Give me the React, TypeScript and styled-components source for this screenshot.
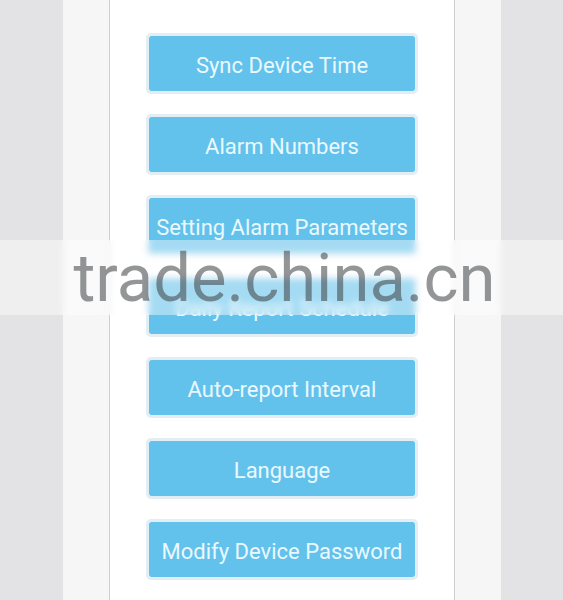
import styled, { createGlobalStyle } from 'styled-components';

const GlobalStyle = createGlobalStyle`
  html, body {
    margin: 0;
    padding: 0;
    background: #e3e3e5;
  }
  body {
    font-family: Roboto, 'Liberation Sans', sans-serif;
  }
`;

const Page = styled.div`
  position: relative;
  display: flex;
  width: 563px;
  height: 600px;
  overflow: hidden;
  background: #e3e3e5;
`;

const Gutter = styled.div`
  flex: 0 0 63px;
`;

const Side = styled.div`
  flex: 0 0 46px;
  background: #f6f6f7;
`;

const Panel = styled.div`
  display: flex;
  flex-direction: column;
  align-items: center;
  gap: 20px;
  box-sizing: border-box;
  flex: 0 0 346px;
  padding-top: 33px;
  background: #ffffff;
  border-left: 1px solid #cfcfd1;
  border-right: 1px solid #cfcfd1;
`;

const MenuButton = styled.button`
  box-sizing: border-box;
  width: 272px;
  height: 61px;
  padding: 3px 0 0;
  border: 3px solid #e2edf4;
  border-radius: 5px;
  background: #63c2eb;
  background-clip: padding-box;
  color: #eaf9ff;
  font-family: Roboto, 'Liberation Sans', sans-serif;
  font-size: 22px;
  cursor: pointer;
`;

const Watermark = styled.div`
  position: absolute;
  left: 0;
  right: 0;
  top: 240px;
  height: 75px;
  display: flex;
  align-items: center;
  justify-content: center;
  background: rgba(255, 255, 255, 0.42);
  backdrop-filter: blur(3px);
  color: rgba(60, 62, 64, 0.55);
  font-family: Roboto, 'Liberation Sans', sans-serif;
  font-size: 67px;
  line-height: 1;
  padding: 2px 0 0 6px;
  box-sizing: border-box;
  pointer-events: none;
`;

const items = [
  'Sync Device Time',
  'Alarm Numbers',
  'Setting Alarm Parameters',
  'Daily Report Schedule',
  'Auto-report Interval',
  'Language',
  'Modify Device Password',
];

export default function App() {
  return (
    <>
      <GlobalStyle />
      <Page>
        <Gutter />
        <Side />
        <Panel>
          {items.map((label) => (
            <MenuButton key={label}>{label}</MenuButton>
          ))}
        </Panel>
        <Side />
        <Gutter />
        <Watermark>trade.china.cn</Watermark>
      </Page>
    </>
  );
}
